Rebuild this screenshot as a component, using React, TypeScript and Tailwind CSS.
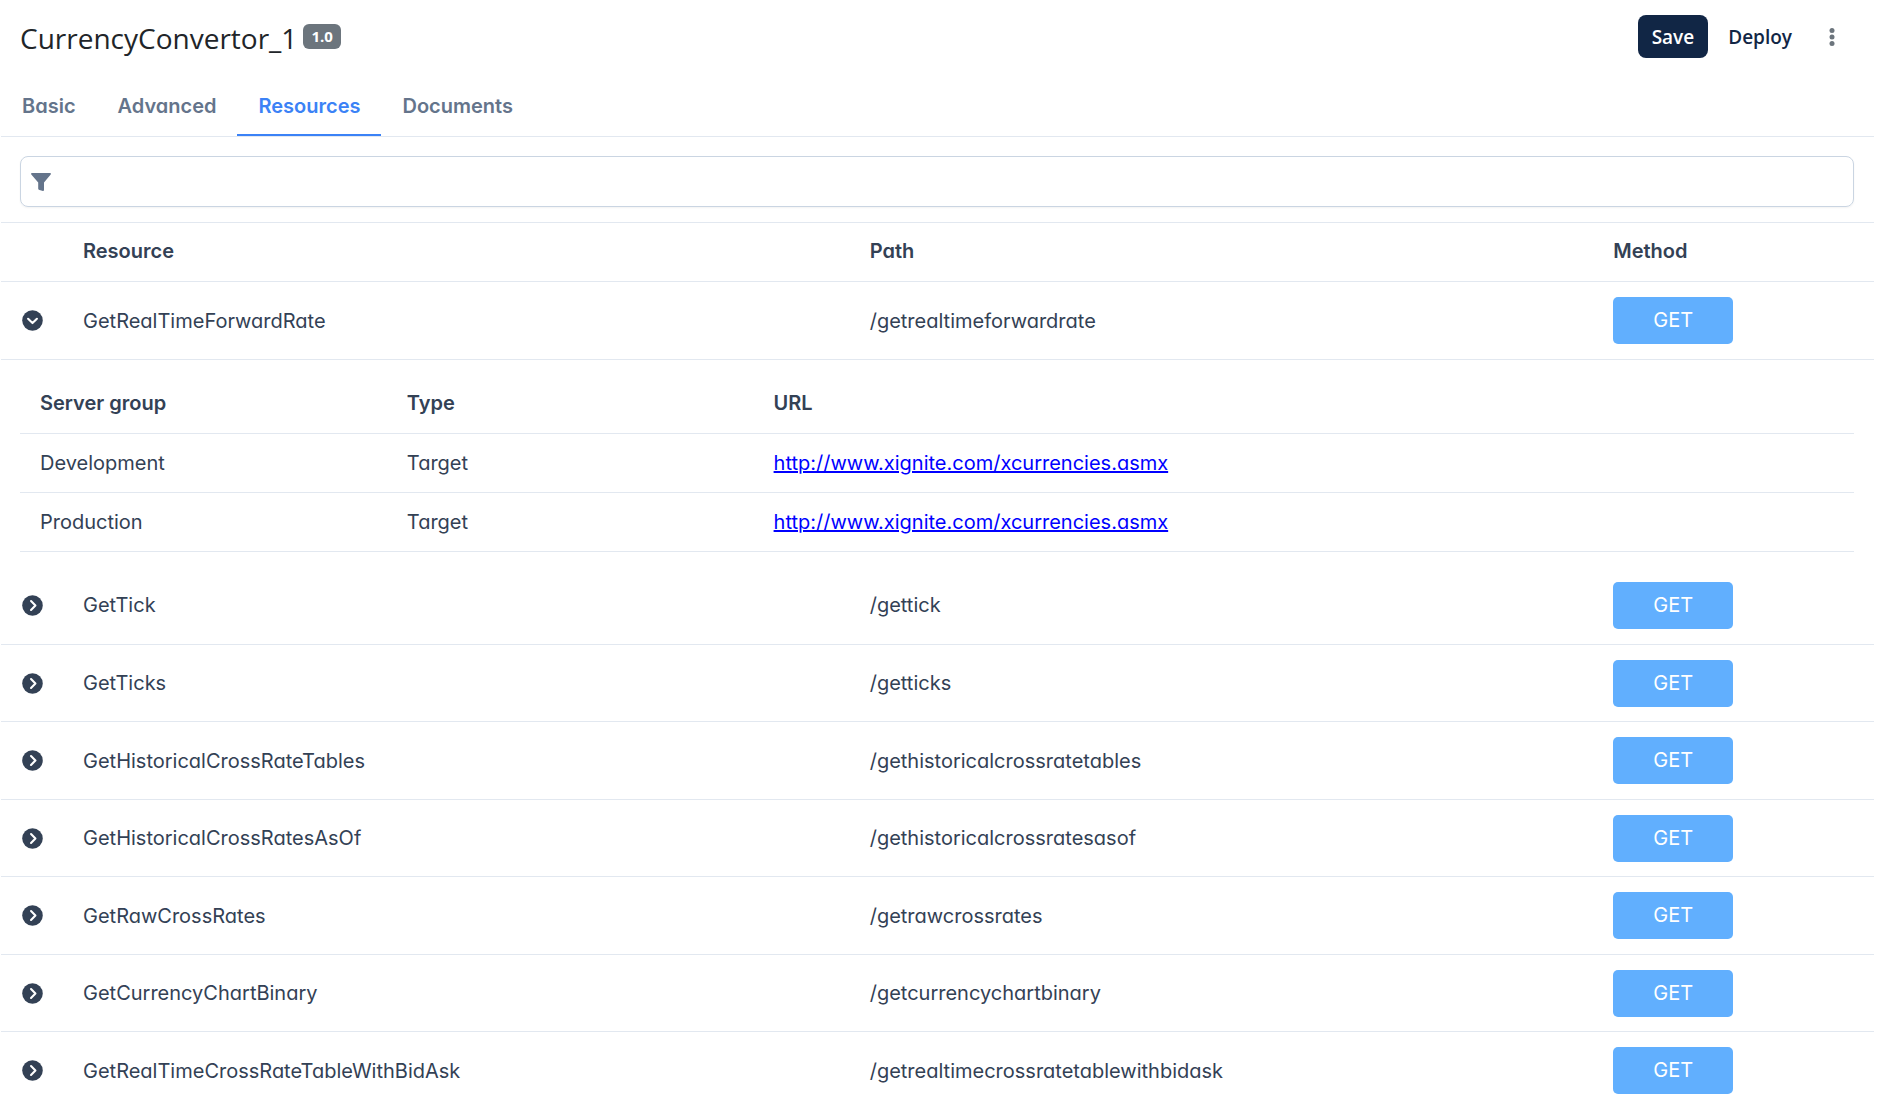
import { Fragment, useState } from "react";

const servers = [
  { group: "Development", type: "Target", url: "http://www.xignite.com/xcurrencies.asmx" },
  { group: "Production", type: "Target", url: "http://www.xignite.com/xcurrencies.asmx" },
];

const resources = [
  "GetRealTimeForwardRate",
  "GetTick",
  "GetTicks",
  "GetHistoricalCrossRateTables",
  "GetHistoricalCrossRatesAsOf",
  "GetRawCrossRates",
  "GetCurrencyChartBinary",
  "GetRealTimeCrossRateTableWithBidAsk",
];

const tabs = ["Basic", "Advanced", "Resources", "Documents"];

function CircleChevron({ open }: { open: boolean }) {
  return (
    <svg viewBox="0 0 20 20" className="size-[21px]" aria-hidden="true">
      <circle cx="10" cy="10" r="9.8" fill="#334155" />
      <path
        d={open ? "M5.800 8.400 10 12.400 14.200 8.400" : "M8.600 5.800 12.800 10 8.600 14.200"}
        fill="none"
        stroke="#fff"
        strokeWidth="2"
        strokeLinecap="round"
        strokeLinejoin="round"
      />
    </svg>
  );
}

function ServerTable() {
  return (
    <table className="w-full table-fixed text-left">
      <thead>
        <tr className="h-[59px] border-b border-slate-200">
          <th className="w-1/5 px-5 font-semibold">Server group</th>
          <th className="w-1/5 px-5 font-semibold">Type</th>
          <th className="px-5 font-semibold">URL</th>
        </tr>
      </thead>
      <tbody>
        {servers.map((s) => (
          <tr key={s.group} className="h-[59px] border-b border-slate-200">
            <td className="px-5">{s.group}</td>
            <td className="px-5">{s.type}</td>
            <td className="px-5">
              <a href={s.url} className="text-[#0000ff] underline">{s.url}</a>
            </td>
          </tr>
        ))}
      </tbody>
    </table>
  );
}

export default function App() {
  const [tab, setTab] = useState("Resources");
  const [open, setOpen] = useState<string[]>(["GetRealTimeForwardRate"]);
  const [filter, setFilter] = useState("");
  const toggle = (name: string) =>
    setOpen(open.includes(name) ? open.filter((n) => n !== name) : [...open, name]);

  return (
    <div className="h-screen overflow-hidden bg-white pr-[17px] pl-px font-['Inter',sans-serif] text-xl leading-6 text-[#334155] [font-feature-settings:'cv02','cv03','cv04','cv11']">
      <header className="flex h-[76px] items-start justify-between pt-[15px] pr-[22px] pl-[19px] font-['Open_Sans',sans-serif] [font-feature-settings:normal]">
        <div className="flex items-start gap-1.5">
          <h1 className="text-[28px] leading-[46px] text-[#212529]">CurrencyConvertor_1</h1>
          <span className="mt-[9px] rounded-md bg-[#6c757d] px-2 text-[15px] leading-[25px] font-bold text-white">1.0</span>
        </div>
        <div className="flex items-center">
          <button type="button" className="h-[43px] rounded-lg bg-[#112645] px-[14px] text-[19px] font-semibold text-white">Save</button>
          <button type="button" className="h-[43px] px-5 text-[19px] font-semibold text-[#112645]">Deploy</button>
          <button type="button" aria-label="More actions" className="flex size-10 items-center justify-center">
            <svg viewBox="0 0 6 18" className="h-[18px] w-[6px]" fill="#6c757d">
              <circle cx="3" cy="2.5" r="2.5" />
              <circle cx="3" cy="9" r="2.5" />
              <circle cx="3" cy="15.5" r="2.5" />
            </svg>
          </button>
        </div>
      </header>

      <nav className="flex h-[61px] border-b border-slate-200">
        {tabs.map((t) => (
          <button
            key={t}
            type="button"
            onClick={() => setTab(t)}
            className={
              t === tab
                ? "border-b-2 border-[#3b82f6] px-[21px] pt-0.5 font-semibold text-[#3b82f6]"
                : "border-b-2 border-transparent px-[21px] pt-0.5 font-semibold text-[#64748b]"
            }
          >
            {t}
          </button>
        ))}
      </nav>

      <div className="pt-[19px] pr-5 pb-[15px] pl-[19px]">
        <label className="flex h-[51px] items-center rounded-lg border border-slate-300 pl-[10px] shadow-xs">
          <svg viewBox="0 0 20 18" className="h-[18px] w-5" aria-hidden="true">
            <path
              d="M.9 0h18.2c.8 0 1.1.8.6 1.4L13 9.600V17c0 .6-.5 1-1.100.9l-3.400-.9c-.8-.2-1.300-.7-1.300-1.500V9.600L.3 1.400C-.2.8.1 0 .9 0Z"
              fill="#64748b"
            />
          </svg>
          <input
            type="text"
            aria-label="Filter resources"
            value={filter}
            onChange={(e) => setFilter(e.target.value)}
            className="h-full flex-1 px-3 outline-none"
          />
        </label>
      </div>

      <table className="w-full table-fixed text-left">
        <thead>
          <tr className="h-[59px] border-y border-slate-200">
            <th className="w-[62px]" aria-label="Expand" />
            <th className="w-[42%] px-5 pb-0.5 font-semibold">Resource</th>
            <th className="w-[39.7%] px-5 pb-0.5 font-semibold">Path</th>
            <th className="px-5 pb-0.5 font-semibold">Method</th>
          </tr>
        </thead>
        <tbody>
          {resources
            .filter((name) => name.toLowerCase().includes(filter.toLowerCase()))
            .map((name) => {
              const expanded = open.includes(name);
              return (
                <Fragment key={name}>
                  <tr className="h-[78px] border-b border-slate-200 even:h-[77px]">
                    <td className="px-5">
                      <button type="button" aria-label={"Toggle " + name} aria-expanded={expanded} onClick={() => toggle(name)} className="block px-px">
                        <CircleChevron open={expanded} />
                      </button>
                    </td>
                    <td className="px-5">{name}</td>
                    <td className="px-5">/{name.toLowerCase()}</td>
                    <td className="px-5">
                      <span className="block h-[47px] w-[120px] rounded-[5px] bg-[#61affe] text-center leading-[47px] text-white">GET</span>
                    </td>
                  </tr>
                  {expanded && (
                    <tr>
                      <td colSpan={4} className="pt-[14px] pr-5 pb-[15px] pl-[19px]">
                        <ServerTable />
                      </td>
                    </tr>
                  )}
                </Fragment>
              );
            })}
        </tbody>
      </table>
    </div>
  );
}
